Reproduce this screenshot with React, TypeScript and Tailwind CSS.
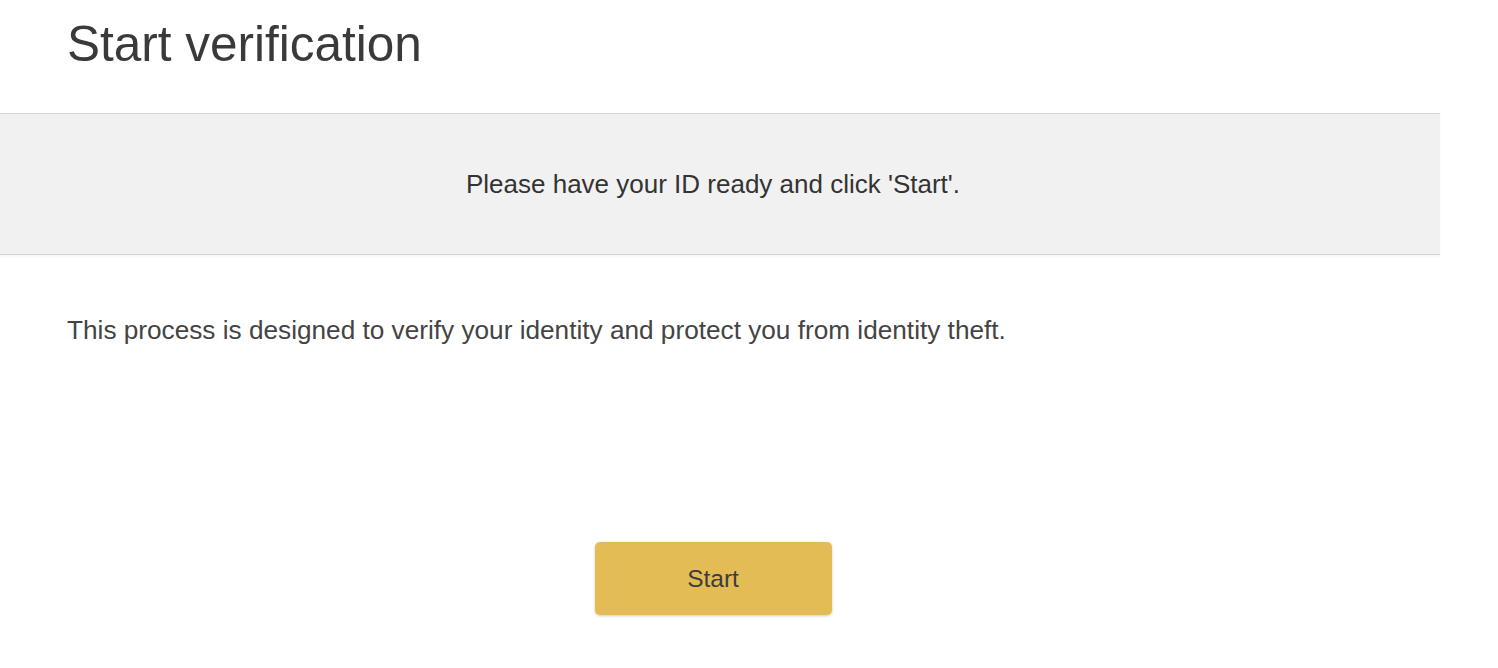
export default function App() {
  return (
    <div className="h-[668px] w-[1498px] overflow-hidden bg-white font-['Liberation_Sans',Arial,sans-serif]">
      <div className="w-[1440px]">
        {/* Heading */}
        <h1 className="px-[67px] pt-[15px] text-[49.5px] leading-[58px] text-[#3a3a3a]">
          Start verification
        </h1>

        {/* Notice band */}
        <div className="mt-[40px] flex h-[142px] items-center justify-center border-y border-[#d6d6d6] bg-[#f1f1f1] pr-[14px] shadow-[0_2px_3px_rgba(0,0,0,0.04)]">
          <p className="text-[26px] leading-[30px] text-[#333]">
            Please have your ID ready and click 'Start'.
          </p>
        </div>

        <p className="mt-[60px] px-[67px] text-[26.2px] leading-[30px] text-[#444]">
          This process is designed to verify your identity and protect you from identity theft.
        </p>

        <div className="mt-[197px] flex justify-center pr-[14px]">
          <button className="h-[73px] w-[237px] rounded-[5px] bg-[#e4bc56] pt-[2px] text-[24.5px] text-[#3d3d3d] shadow-[0_1px_3px_rgba(0,0,0,0.2)]">
            Start
          </button>
        </div>
      </div>
    </div>
  );
}
